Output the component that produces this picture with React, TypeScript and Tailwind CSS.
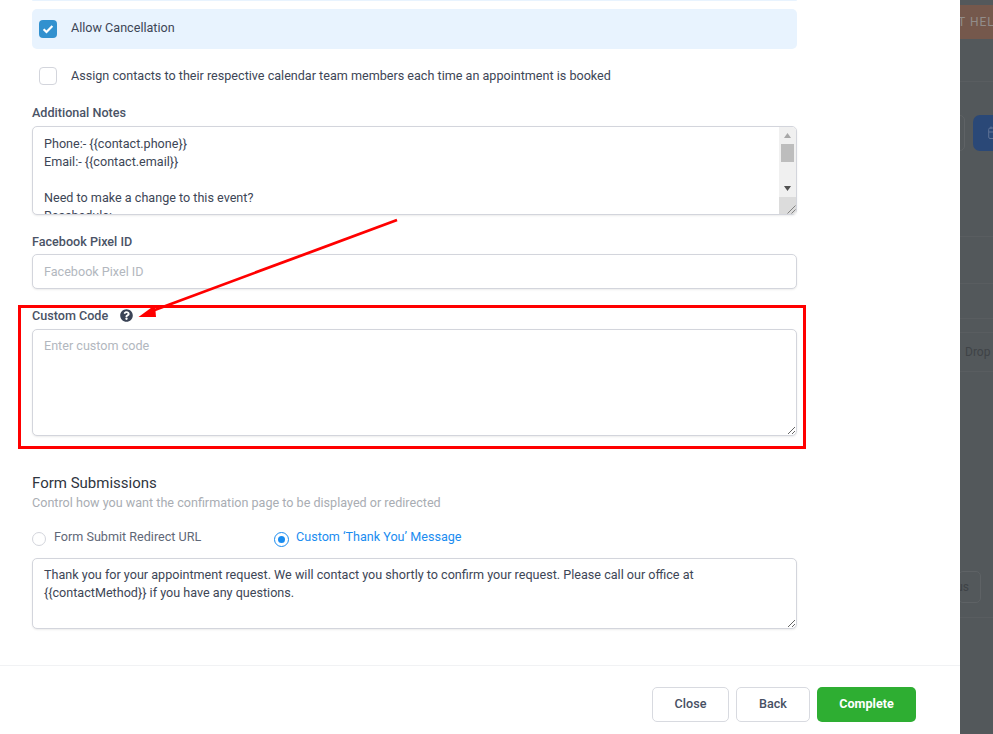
import React from "react";

const notes = "Phone:- {{contact.phone}}\nEmail:- {{contact.email}}\n\nNeed to make a change to this event?\nReschedule:\n{{reschedule_link}}";
const thanks = "Thank you for your appointment request. We will contact you shortly to confirm your request. Please call our office at {{contactMethod}} if you have any questions.";
const field = "block w-full rounded-[5px] border border-[#d3d5dc] bg-white px-[11px] pb-[6px] text-[12.6px] leading-[18px] text-[#3d4656] shadow-[0_1px_2px_rgba(0,0,0,0.08)] outline-none placeholder:text-[#b2b7be]";

function Label({ children }: { children: React.ReactNode }) {
  return <div className="h-[18px] text-[12.6px] font-medium leading-[18px] text-[#4a5366]">{children}</div>;
}

export default function App() {
  return (
    <div className="relative flex h-[734px] w-[993px] overflow-hidden bg-white font-['Roboto',sans-serif]">
      <main className="flex w-[960px] flex-col bg-white">
        <div className="flex-1 px-[32px]">
          <div className="h-px w-[765px] rounded-b bg-[#e8f3fe]" />
          <div className="mt-[8px] flex h-[40px] w-[765px] items-center rounded-[5px] bg-[#e8f3fe] pl-[7px]">
            <span className="flex h-[18px] w-[18px] items-center justify-center rounded-[4px] bg-[#3291cf]">
              <svg width="12" height="10" viewBox="0 0 12 10" fill="none"><path d="M1.6 5.2 4.5 8 10.4 2" stroke="white" strokeWidth="2.2" /></svg>
            </span>
            <span className="-mt-[2px] ml-[14px] text-[12.6px] text-[#3d4656]">Allow Cancellation</span>
          </div>
          <div className="mt-[18px] flex h-[18px] items-center pl-[7px]">
            <span className="h-[18px] w-[18px] rounded-[4px] border border-[#d3d5dc] bg-white" />
            <span className="ml-[14px] text-[12.6px] text-[#3d4656]">Assign contacts to their respective calendar team members each time an appointment is booked</span>
          </div>

          <div className="mt-[19px] w-[765px]">
            <Label>Additional Notes</Label>
            <div className="relative mt-[4px] h-[89px]">
              <textarea readOnly defaultValue={notes} className={`${field} h-[89px] resize-y overflow-hidden pr-[30px] pt-[8px]`} />
              <div className="absolute right-[1px] top-[1px] flex h-[87px] w-[17px] flex-col items-center rounded-tr-[4px] bg-[#f0f0f0]">
                <svg className="mt-[6px]" width="7" height="5" viewBox="0 0 7 5"><path d="M3.5 0 7 5H0Z" fill="#a8a8a8" /></svg>
                <div className="mt-[6px] h-[18px] w-[13px] bg-[#bdbdbd]" />
                <svg className="mt-[24px]" width="7" height="5" viewBox="0 0 7 5"><path d="M0 0h7L3.500 5Z" fill="#505050" /></svg>
                <div className="mt-auto flex h-[17px] w-[17px] items-end justify-end rounded-br-[4px] bg-[#dcdcdc]">
                  <svg width="10" height="10" viewBox="0 0 10 10" fill="none"><path d="M1.5 9.5 9.500 1.500M5.500 9.500 9.500 5.500" stroke="#6b6b6b" strokeWidth="0.8" /></svg>
                </div>
              </div>
            </div>
          </div>

          <div className="mt-[18px] w-[765px]">
            <Label>Facebook Pixel ID</Label>
            <input readOnly placeholder="Facebook Pixel ID" className={`${field} mt-[3px] h-[35px] pt-[6px]`} />
          </div>

          <div className="mt-[18px] w-[765px]">
            <div className="flex h-[18px] items-center">
              <Label>Custom Code</Label>
              <svg className="ml-[12px] -mt-[2px]" width="13" height="13" viewBox="0 0 512 512"><path fill="#3a4356" d="M504 256c0 137-111 248-248 248S8 393 8 256 119 8 256 8s248 111 248 248zM262.700 90c-54.500 0-89.300 23-116.500 63.800-3.500 5.300-2.400 12.400 2.700 16.300l34.700 26.300c5.200 3.900 12.600 3 16.700-2.100 17.900-22.700 30.100-35.800 57.300-35.800 20.400 0 45.700 13.100 45.700 33 0 15-12.400 22.700-32.600 34C247.100 238.500 216 254.900 216 296v4c0 6.600 5.400 12 12 12h56c6.600 0 12-5.400 12-12v-1.300c0-28.500 83.200-29.700 83.200-106.700 0-58-60.200-102-116.500-102zM256 338c-25.400 0-46 20.600-46 46s20.600 46 46 46 46-20.600 46-46-20.600-46-46-46z" /></svg>
            </div>
            <textarea readOnly placeholder="Enter custom code" className={`${field} mt-[4px] h-[107px] resize-y pt-[7px]`} />
          </div>

          <h2 className="mt-[38px] text-[15px] font-normal leading-[18px] text-[#2f3540]">Form Submissions</h2>
          <p className="mt-[2px] text-[12.6px] leading-[18px] text-[#a9adb3]">Control how you want the confirmation page to be displayed or redirected</p>

          <div className="mt-[16px] flex h-[18px] items-center text-[12.6px]">
            <span className="mt-[4px] h-[14px] w-[14px] rounded-full border border-[#d3d5dc] bg-white" />
            <span className="ml-[8px] w-[220px] text-[#5f6877]">Form Submit Redirect URL</span>
            <span className="mt-[4px] flex h-[15px] w-[15px] items-center justify-center rounded-full border border-[#1a8cf0]">
              <span className="h-[7px] w-[7px] rounded-full bg-[#1a8cf0]" />
            </span>
            <span className="ml-[7px] text-[#1a8cf0]">Custom ‘Thank You’ Message</span>
          </div>

          <div className="mt-[12px] w-[765px]">
            <textarea readOnly defaultValue={thanks} className={`${field} h-[71px] resize-y pt-[7px]`} />
          </div>
        </div>

        <footer className="flex h-[69px] items-start justify-end gap-[7px] border-t border-[#f1f2f4] pr-[44px] pt-[21px] text-[12.6px] font-medium">
          <button className="h-[35px] w-[77px] rounded-[5px] border border-[#d8dae0] bg-white pb-[1px] text-[#475063]">Close</button>
          <button className="h-[35px] w-[74px] rounded-[5px] border border-[#d8dae0] bg-white pb-[1px] text-[#475063]">Back</button>
          <button className="h-[35px] w-[99px] rounded-[5px] bg-[#2eae32] pb-[1px] font-bold text-white">Complete</button>
        </footer>
      </main>

      <aside className="flex w-[33px] flex-col overflow-hidden whitespace-nowrap bg-[#53585b] text-[12px] text-[#3f4347]">
        <div className="mt-[5px] flex h-[34px] items-center overflow-hidden bg-[#75584c] text-[12px] tracking-[1px] text-[#928d8a]"><span className="-ml-[2px]">T HEL</span></div>
        <div className="mt-[42px] h-px bg-[#595d60]" />
        <div className="mt-[33px] flex h-[36px] gap-[8px]">
          <span className="-ml-[10px] w-[15px] shrink-0 rounded-[5px] border border-[#5e6265]" />
          <span className="flex w-[40px] shrink-0 items-center rounded-[7px] bg-[#2a4877] pl-[15px]">
            <svg width="8" height="14" viewBox="0 0 8 14" fill="none"><path d="M8 2H2Q.7 2 .7 3.500V11Q.7 12.500 2 12.500H8M.7 6H8M3 .5V3" stroke="#5f7396" /></svg>
          </span>
        </div>
        <div className="mt-[85px] h-px bg-[#595d60]" />
        <div className="mt-[46px] h-px bg-[#595d60]" />
        <div className="mt-[34px] h-px bg-[#595d60]" />
        <div className="mt-[13px] flex h-[40px] items-center border-y border-[#595d60]"><span className="ml-[5px]">Drop</span></div>
        <div className="mt-[199px] flex h-[32px] items-center"><span className="-ml-[2px] flex h-[32px] w-[23px] items-center justify-end rounded-[5px] border border-[#5e6265] pr-[11px]">us</span></div>
        <div className="mt-[14px] h-px bg-[#595d60]" />
      </aside>

      <div className="pointer-events-none absolute left-[18px] top-[305px] h-[144px] w-[788px] border-[3px] border-[#ff0000]" />
      <svg className="pointer-events-none absolute left-0 top-0" width="993" height="734" fill="none">
        <path d="M397 220 152 311" stroke="#ff0000" strokeWidth="2.8" />
        <path d="M138.500 317 155 305 156 317Z" fill="#ff0000" />
      </svg>
    </div>
  );
}
